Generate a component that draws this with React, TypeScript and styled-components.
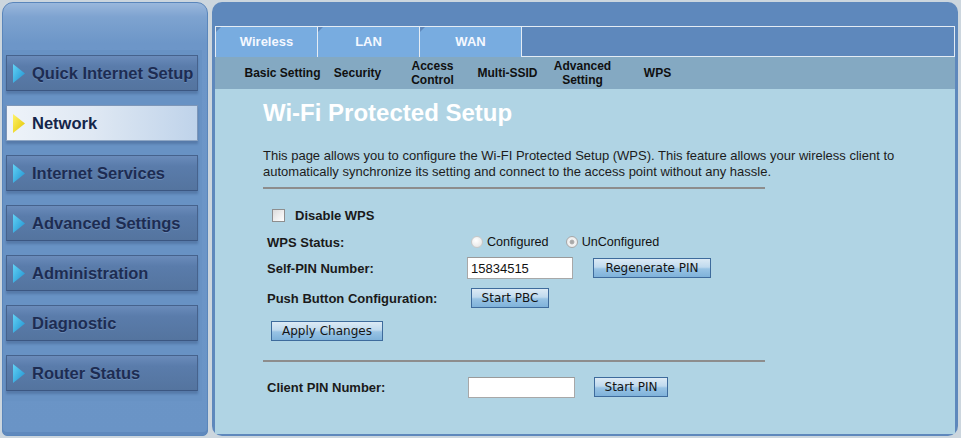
import React from "react";
import styled, { createGlobalStyle } from "styled-components";

const Global = createGlobalStyle`
  html, body { margin: 0; padding: 0; }
  body {
    background: #ccd6de;
    font-family: "Liberation Sans", Arial, sans-serif;
  }
  * { box-sizing: border-box; }
`;

const Page = styled.div`
  display: flex;
  gap: 4px;
  padding: 2px 3px 2px 2px;
  height: 438px;
  width: 961px;
`;

const Sidebar = styled.aside`
  width: 206px;
  height: 434px;
  border: 1px solid #5a86bb;
  border-radius: 11px 11px 5px 5px;
  background: linear-gradient(
    to bottom,
    #9ab8dc 0px,
    #7ea3d0 14px,
    #6d96c8 40px,
    #6a94c6 100%
  );
  display: flex;
  flex-direction: column;
  box-shadow: inset 0 -3px 0 #5f89bd;
`;

const MenuWell = styled.nav`
  margin: 47px 5px 0 0;
  padding: 5px 4px 10px 3px;
  background: #6892c4;
  display: flex;
  flex-direction: column;
  gap: 14px;
`;

const MenuItem = styled.div<{ $active?: boolean }>`
  height: 36px;
  display: flex;
  align-items: center;
  gap: 7px;
  padding-left: 6px;
  border: 1px solid ${(p) => (p.$active ? "#7d96b8" : "#46628c")};
  border-bottom-color: ${(p) => (p.$active ? "#8ea6c4" : "#3c5782")};
  background: ${(p) =>
    p.$active
      ? "linear-gradient(to right, #eef3f9 0%, #dfe8f3 45%, #bfd3ea 100%)"
      : "linear-gradient(to bottom, #6a8bba 0%, #5a7cab 30%, #54749f 100%)"};
  box-shadow: 0 3px 2px rgba(30, 50, 90, 0.25);
  font-size: 16.5px;
  font-weight: bold;
  color: ${(p) => (p.$active ? "#15254a" : "#1d2c52")};
  text-shadow: ${(p) =>
    p.$active ? "none" : "0 1px 0 rgba(150, 180, 220, 0.35)"};
  white-space: nowrap;
`;

const Arrow = ({ active }: { active?: boolean }) => (
  <svg width="12" height="19" viewBox="0 0 12 19">
    <defs>
      <linearGradient id={active ? "ay" : "ab"} x1="0" y1="0" x2="1" y2="1">
        <stop offset="0" stopColor={active ? "#fff36a" : "#62d4f6"} />
        <stop offset="1" stopColor={active ? "#e2c400" : "#1f8fcf"} />
      </linearGradient>
    </defs>
    <polygon
      points="0,0 12,9.5 0,19"
      fill={`url(#${active ? "ay" : "ab"})`}
    />
  </svg>
);

const Main = styled.main`
  width: 746px;
  height: 434px;
  border-radius: 10px;
  background: #5e88bc;
  padding: 24px 3px 2px 3px;
  display: flex;
  flex-direction: column;
`;

const TabRow = styled.div`
  display: flex;
  height: 31px;
`;

const Tab = styled.div`
  position: relative;
  width: 102px;
  height: 31px;
  border-left: 1px solid #e4ecf4;
  border-top: 1px solid #e4ecf4;
  background: #78ace0;
  color: #f4f8ff;
  font-size: 13px;
  font-weight: bold;
  display: flex;
  align-items: center;
  justify-content: center;
  padding-bottom: 1px;
  &::before {
    content: "";
    position: absolute;
    left: 0;
    top: 0;
    border-top: 5px solid #5e88bc;
    border-right: 5px solid transparent;
  }
`;

const TabFill = styled.div`
  flex: 1;
  border: 1px solid #e4ecf4;
  background: #5e88bc;
`;

const SubNav = styled.div`
  height: 32px;
  background: #84a9c2;
  display: flex;
  padding-left: 30px;
`;

const SubItem = styled.div`
  width: 75px;
  display: flex;
  align-items: center;
  justify-content: center;
  text-align: center;
  font-size: 12px;
  font-weight: bold;
  line-height: 14px;
  color: #101010;
  white-space: nowrap;
`;

const Content = styled.section`
  flex: 1;
  background: #b0d4e4;
  padding: 10px 0 0 48px;
`;

const Title = styled.h1`
  margin: 0;
  font-size: 24px;
  line-height: 28px;
  font-weight: bold;
  color: #ffffff;
`;

const Intro = styled.p`
  margin: 21px 0 0;
  max-width: 680px;
  font-size: 13px;
  line-height: 16px;
  color: #1c1c1c;
`;

const Rule = styled.div<{ $mt: number }>`
  margin-top: ${(p) => p.$mt}px;
  width: 502px;
  height: 2px;
  background: #8d8d8d;
`;

const Form = styled.div`
  padding-left: 4px;
  display: flex;
  flex-direction: column;
`;

const Row = styled.div<{ $h: number; $mt?: number }>`
  display: flex;
  align-items: center;
  height: ${(p) => p.$h}px;
  margin-top: ${(p) => p.$mt ?? 0}px;
`;

const Label = styled.div<{ $w?: number }>`
  width: ${(p) => p.$w ?? 200}px;
  font-size: 13px;
  font-weight: bold;
  color: #1a1a1a;
  flex-shrink: 0;
`;

const Check = styled.input.attrs({ type: "checkbox" })`
  appearance: none;
  margin: 0 10px 0 5px;
  width: 13px;
  height: 13px;
  border: 1px solid #8e8e8e;
  background: linear-gradient(135deg, #dcdcdc, #ffffff);
`;

const CheckText = styled.span`
  font-size: 13px;
  font-weight: bold;
  color: #1a1a1a;
`;

const RadioGroup = styled.div`
  display: flex;
  align-items: center;
  margin-left: 4px;
`;

const Radio = styled.input.attrs({ type: "radio" })`
  appearance: none;
  margin: 0 4px 0 0;
  width: 12px;
  height: 12px;
  border-radius: 50%;
  border: 1px solid #c8c8c8;
  background: radial-gradient(circle at 40% 35%, #ffffff, #e0e0e0);
  &:checked {
    border-color: #a8a8a8;
    background: radial-gradient(
      circle,
      #a4a4a4 0,
      #b0b0b0 2px,
      #f4f4f4 2.8px,
      #e4e4e4 100%
    );
  }
`;

const RadioText = styled.span<{ $gap?: number }>`
  font-size: 12.6px;
  color: #111;
  margin-right: ${(p) => p.$gap ?? 0}px;
`;

const TextBox = styled.input<{ $w: number; $h: number }>`
  width: ${(p) => p.$w}px;
  height: ${(p) => p.$h}px;
  margin: 0;
  padding: 0 3px;
  border: 1px solid #a8a8a8;
  border-top-color: #9a9a9a;
  background: #ffffff;
  font-family: "Liberation Sans", Arial, sans-serif;
  font-size: 13px;
  color: #111;
  outline: none;
`;

const Button = styled.button<{ $w: number; $ml?: number }>`
  width: ${(p) => p.$w}px;
  height: 20px;
  margin: 0 0 0 ${(p) => p.$ml ?? 0}px;
  padding: 0;
  border: 1px solid #3e6b9c;
  background: linear-gradient(
    to bottom,
    #dceaf5 0%,
    #c0daee 45%,
    #98c3e4 55%,
    #7fb2da 100%
  );
  font-family: "DejaVu Sans", Verdana, sans-serif;
  font-size: 12px;
  color: #141414;
  line-height: 18px;
`;

const menu = [
  "Quick Internet Setup",
  "Network",
  "Internet Services",
  "Advanced Settings",
  "Administration",
  "Diagnostic",
  "Router Status",
];

export default function App() {
  return (
    <>
      <Global />
      <Page>
        <Sidebar>
          <MenuWell>
            {menu.map((m) => (
              <MenuItem key={m} $active={m === "Network"}>
                <Arrow active={m === "Network"} />
                {m}
              </MenuItem>
            ))}
          </MenuWell>
        </Sidebar>
        <Main>
          <TabRow>
            <Tab>Wireless</Tab>
            <Tab>LAN</Tab>
            <Tab>WAN</Tab>
            <TabFill />
          </TabRow>
          <SubNav>
            <SubItem>Basic Setting</SubItem>
            <SubItem>Security</SubItem>
            <SubItem>
              Access
              <br />
              Control
            </SubItem>
            <SubItem>Multi-SSID</SubItem>
            <SubItem>
              Advanced
              <br />
              Setting
            </SubItem>
            <SubItem>WPS</SubItem>
          </SubNav>
          <Content>
            <Title>Wi-Fi Protected Setup</Title>
            <Intro>
              This page allows you to configure the Wi-FI Protected Setup
              (WPS). This feature allows your wireless client to automatically
              synchronize its setting and connect to the access point without
              any hassle.
            </Intro>
            <Rule $mt={7} />
            <Form>
              <Row $h={24} $mt={14}>
                <Check />
                <CheckText>Disable WPS</CheckText>
              </Row>
              <Row $h={30}>
                <Label>WPS Status:</Label>
                <RadioGroup>
                  <Radio name="st" />
                  <RadioText $gap={17}>Configured</RadioText>
                  <Radio name="st" defaultChecked />
                  <RadioText>UnConfigured</RadioText>
                </RadioGroup>
              </Row>
              <Row $h={22}>
                <Label>Self-PIN Number:</Label>
                <TextBox $w={106} $h={22} defaultValue="15834515" />
                <Button $w={118} $ml={20}>
                  Regenerate PIN
                </Button>
              </Row>
              <Row $h={38}>
                <Label>Push Button Configuration:</Label>
                <Button $w={78} $ml={4}>
                  Start PBC
                </Button>
              </Row>
              <Row $h={28}>
                <Button $w={112} $ml={4}>
                  Apply Changes
                </Button>
              </Row>
            </Form>
            <Rule $mt={15} />
            <Form>
              <Row $h={22} $mt={14}>
                <Label $w={201}>Client PIN Number:</Label>
                <TextBox $w={107} $h={21} />
                <Button $w={74} $ml={19}>
                  Start PIN
                </Button>
              </Row>
            </Form>
          </Content>
        </Main>
      </Page>
    </>
  );
}
